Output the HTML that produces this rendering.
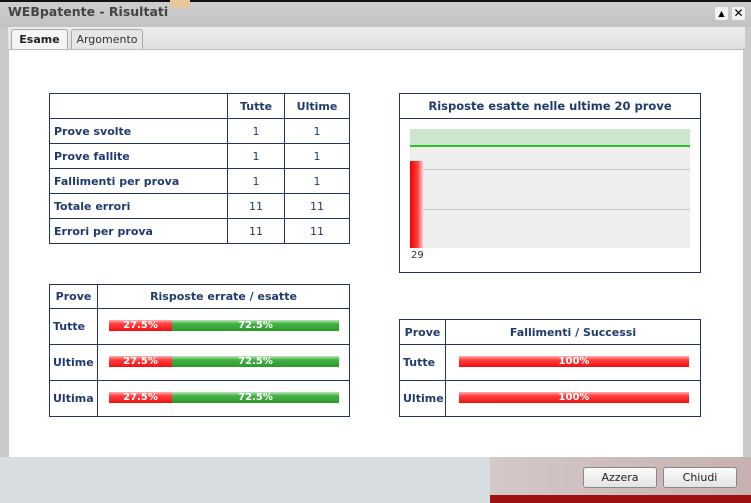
<!DOCTYPE html>
<html><head><meta charset="utf-8"><style>
*{margin:0;padding:0;box-sizing:border-box}
body{width:751px;height:503px;position:relative;overflow:hidden;background:#c9c9c9;font-family:"DejaVu Sans","Liberation Sans",sans-serif}
.abs{position:absolute}
table{position:absolute;border-collapse:collapse;background:#fff;table-layout:fixed}
td{border:1px solid #1f3566;color:#1f3a6e;font-size:11px;padding:0 4px}
td.b{font-weight:bold}
td.c{text-align:center}
.bar{position:absolute;height:11px}
.red{background:linear-gradient(#ffb0b0,#ff4040 35%,#ee1010)}
.grn{background:linear-gradient(#b8e8b8,#44b044 35%,#2a9a2a)}
.bt{font-size:10px;font-weight:bold;color:#fff;text-align:center;line-height:11px}
.btn{position:absolute;top:467px;height:21px;border:1px solid #888;border-radius:3px;background:linear-gradient(#fafafa,#e4e4e4);font-size:11px;text-align:center;line-height:19px;color:#222}
</style></head><body>
<div class="abs" style="left:0;top:0;width:751px;height:27px;background:linear-gradient(#cfcfcf,#c2c2c2)"></div>
<div class="abs" style="left:0;top:0;width:751px;height:2px;background:#111"></div>
<div class="abs" style="left:170px;top:0;width:20px;height:8px;background:#e9c79a"></div>
<div class="abs" style="left:8px;top:4px;font-size:12.5px;font-weight:bold;color:#444;font-family:'DejaVu Sans',sans-serif">WEBpatente - Risultati</div>
<div class="abs" style="left:715px;top:7px;width:13px;height:13px;background:#f2f2f2;border-radius:2px;font-size:8px;text-align:center;line-height:13px">▲</div>
<div class="abs" style="left:732px;top:7px;width:13px;height:13px;background:#f2f2f2;border-radius:2px;font-size:12px;text-align:center;line-height:13px">✕</div>
<div class="abs" style="left:8px;top:27px;width:737px;height:23px;background:linear-gradient(#ececec,#e0e0e0)"></div>
<div class="abs" style="left:11px;top:29px;width:57px;height:22px;background:#f4f4f4;border:1px solid #aaa;border-bottom:none;border-radius:3px 3px 0 0;font-size:11px;font-weight:bold;text-align:center;line-height:20px;color:#222">Esame</div>
<div class="abs" style="left:71px;top:29px;width:72px;height:20px;background:#e6e6e6;border:1px solid #aaa;border-bottom:none;border-radius:3px 3px 0 0;font-size:11px;text-align:center;line-height:19px;color:#333">Argomento</div>
<div class="abs" style="left:8px;top:49px;width:737px;height:1px;background:#bbb"></div>
<div class="abs" style="left:9px;top:50px;width:734px;height:407px;background:#fff"></div>
<div class="abs" style="left:0;top:457px;width:751px;height:46px;background:#d8dde2"></div>
<div class="abs" style="left:490px;top:457px;width:261px;height:46px;background:linear-gradient(90deg,#d4c8c8,#c8b0b0)"></div>
<div class="abs" style="left:490px;top:495px;width:261px;height:8px;background:#a01010"></div>

<table style="left:49px;top:93px;width:300px">
<colgroup><col style="width:178px"><col style="width:57px"><col style="width:65px"></colgroup>
<tr style="height:25px"><td></td><td class="b c">Tutte</td><td class="b c">Ultime</td></tr>
<tr style="height:25px"><td class="b">Prove svolte</td><td class="c">1</td><td class="c">1</td></tr>
<tr style="height:25px"><td class="b">Prove fallite</td><td class="c">1</td><td class="c">1</td></tr>
<tr style="height:25px"><td class="b">Fallimenti per prova</td><td class="c">1</td><td class="c">1</td></tr>
<tr style="height:25px"><td class="b">Totale errori</td><td class="c">11</td><td class="c">11</td></tr>
<tr style="height:25px"><td class="b">Errori per prova</td><td class="c">11</td><td class="c">11</td></tr>
</table>

<table style="left:399px;top:93px;width:302px">
<tr style="height:25px"><td class="b c" style="font-size:11.5px">Risposte esatte nelle ultime 20 prove</td></tr>
<tr style="height:154px"><td></td></tr>
</table>
<div class="abs" style="left:410px;top:129px;width:280px;height:119px;background:#eeeeee"></div>
<div class="abs" style="left:410px;top:129px;width:280px;height:16px;background:#cde7cd"></div>
<div class="abs" style="left:410px;top:145px;width:280px;height:2px;background:#2cc02c"></div>
<div class="abs" style="left:410px;top:169px;width:280px;height:1px;background:#c4c4c4"></div>
<div class="abs" style="left:410px;top:209px;width:280px;height:1px;background:#c4c4c4"></div>
<div class="abs" style="left:410px;top:161px;width:13px;height:87px;background:linear-gradient(90deg,#f00000,#ff4040 60%,#ffd0d0)"></div>
<div class="abs" style="left:411px;top:250px;font-size:10px;color:#333">29</div>

<table style="left:49px;top:284px;width:301px">
<colgroup><col style="width:48px"><col></colgroup>
<tr style="height:24px"><td class="b c" style="padding:0">Prove</td><td class="b c">Risposte errate / esatte</td></tr>
<tr style="height:36px"><td class="b" style="padding:0 3px">Tutte</td><td></td></tr>
<tr style="height:36px"><td class="b" style="padding:0 3px">Ultime</td><td></td></tr>
<tr style="height:36px"><td class="b" style="padding:0 3px">Ultima</td><td></td></tr>
</table>
<div class="bar red bt" style="left:109px;top:320px;width:63px">27.5%</div><div class="bar grn bt" style="left:172px;top:320px;width:167px">72.5%</div>
<div class="bar red bt" style="left:109px;top:356px;width:63px">27.5%</div><div class="bar grn bt" style="left:172px;top:356px;width:167px">72.5%</div>
<div class="bar red bt" style="left:109px;top:392px;width:63px">27.5%</div><div class="bar grn bt" style="left:172px;top:392px;width:167px">72.5%</div>

<table style="left:399px;top:319px;width:302px">
<colgroup><col style="width:46px"><col></colgroup>
<tr style="height:25px"><td class="b c" style="padding:0">Prove</td><td class="b c">Fallimenti / Successi</td></tr>
<tr style="height:36px"><td class="b" style="padding:0 3px">Tutte</td><td></td></tr>
<tr style="height:36px"><td class="b" style="padding:0 3px">Ultime</td><td></td></tr>
</table>
<div class="bar red bt" style="left:459px;top:356px;width:230px">100%</div>
<div class="bar red bt" style="left:459px;top:392px;width:230px">100%</div>

<div class="btn" style="left:583px;width:74px">Azzera</div>
<div class="btn" style="left:663px;width:74px">Chiudi</div>
</body></html>
